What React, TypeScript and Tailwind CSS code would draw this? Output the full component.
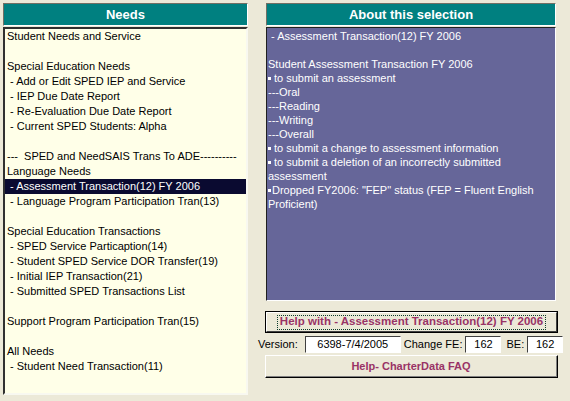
const needs: { text: string; selected?: boolean }[] = [
  { text: 'Student Needs and Service' },
  { text: '' },
  { text: 'Special Education Needs' },
  { text: ' - Add or Edit SPED IEP and Service' },
  { text: ' - IEP Due Date Report' },
  { text: ' - Re-Evaluation Due Date Report' },
  { text: ' - Current SPED Students: Alpha' },
  { text: '' },
  { text: '---  SPED and NeedSAIS Trans To ADE----------' },
  { text: 'Language Needs' },
  { text: ' - Assessment Transaction(12) FY 2006', selected: true },
  { text: ' - Language Program Participation Tran(13)' },
  { text: '' },
  { text: 'Special Education Transactions' },
  { text: ' - SPED Service Particaption(14)' },
  { text: ' - Student SPED Service DOR Transfer(19)' },
  { text: ' - Initial IEP Transaction(21)' },
  { text: ' - Submitted SPED Transactions List' },
  { text: '' },
  { text: 'Support Program Participation Tran(15)' },
  { text: '' },
  { text: 'All Needs' },
  { text: ' - Student Need Transaction(11)' },
];

// bullet: null = plain line, 'sp' = bullet + space, 'tight' = bullet glued to text
const about: { text: string; bullet?: 'sp' | 'tight' }[] = [
  { text: ' - Assessment Transaction(12) FY 2006' },
  { text: '' },
  { text: 'Student Assessment Transaction FY 2006' },
  { text: 'to submit an assessment', bullet: 'sp' },
  { text: '---Oral' },
  { text: '---Reading' },
  { text: '---Writing' },
  { text: '---Overall' },
  { text: 'to submit a change to assessment information', bullet: 'sp' },
  { text: 'to submit a deletion of an incorrectly submitted', bullet: 'sp' },
  { text: 'assessment' },
  { text: 'Dropped FY2006: "FEP" status (FEP = Fluent English', bullet: 'tight' },
  { text: 'Proficient)' },
];

const font = "font-['Liberation_Sans',Arial,sans-serif]";

const Header = ({ title }: { title: string }) => (
  <div className="h-[23px] bg-[#008080] border border-t-[#716f64] border-l-[#716f64] border-r-white border-b-white flex items-center justify-center text-white font-bold text-[13px] leading-none">
    {title}
  </div>
);

const Field = ({ value, w }: { value: string; w: string }) => (
  <div
    className={`${w} h-[17px] bg-white border border-t-[#404040] border-l-[#404040] border-r-white border-b-white flex items-center justify-center text-[11px] text-black leading-none`}
  >
    {value}
  </div>
);

export default function App() {
  return (
    <div className={`w-[570px] h-[401px] bg-[#ece9d8] pl-[3px] pt-[3px] flex gap-[10px] ${font}`}>
      {/* Needs list */}
      <div className="w-[245px] flex flex-col">
        <Header title="Needs" />
        <div className="mt-[1px] h-[368px] bg-[#ffffe8] border-2 border-t-[#303030] border-l-[#303030] border-r-[#f8f8f0] border-b-[#f8f8f0] overflow-hidden">
          {needs.map((n, i) => (
            <div
              key={i}
              className={`h-[15px] pl-[2px] whitespace-pre text-[11px] leading-[15px] ${
                n.selected ? 'bg-[#0a0a30] text-white' : 'text-black'
              }`}
            >
              {n.text}
            </div>
          ))}
        </div>
      </div>

      {/* About this selection */}
      <div className="w-[308px] flex flex-col">
        <div className="ml-[8px] w-[290px]">
          <Header title="About this selection" />
        </div>
        <div className="ml-[8px] w-[290px] mt-[1px] h-[274px] bg-[#666699] border border-t-[#202020] border-l-[#202020] border-r-white border-b-white pt-[1px] overflow-hidden">
          {about.map((a, i) => (
            <div key={i} className="h-[14px] pl-[1px] whitespace-pre text-[11px] leading-[14px] text-white flex items-center">
              {a.bullet && (
                <span
                  className={`inline-block w-[3px] h-[3px] bg-white ${a.bullet === 'sp' ? 'mr-[3px]' : 'mr-[1px]'}`}
                />
              )}
              {a.text}
            </div>
          ))}
        </div>

        {/* Help button (default, focused) */}
        <div className="ml-[7px] w-[293px] mt-[10px] h-[22px] border border-black">
          <div className="h-full border border-t-white border-l-white border-r-[#404040] border-b-[#404040] flex items-center justify-center">
            <div className="px-[2px] h-[15px] border border-dotted border-[#0a3a2a] flex items-center text-[11.5px] font-bold text-[#993366] leading-none">
              Help with - Assessment Transaction(12) FY 2006
            </div>
          </div>
        </div>

        {/* Version row */}
        <div className="mt-[3px] flex items-center text-[11px] text-black leading-none">
          <span>Version:</span>
          <div className="ml-[7px]">
            <Field value="6398-7/4/2005" w="w-[96px]" />
          </div>
          <span className="ml-[3px]">Change FE:</span>
          <div className="ml-[3px]">
            <Field value="162" w="w-[36px]" />
          </div>
          <span className="ml-[5px]">BE:</span>
          <div className="ml-[3px]">
            <Field value="162" w="w-[36px]" />
          </div>
        </div>

        {/* FAQ button */}
        <div className="ml-[7px] w-[293px] mt-[2px] h-[23px] border border-t-white border-l-white border-r-black border-b-black">
          <div className="h-full border-r border-b border-r-[#808080] border-b-[#808080] flex items-center justify-center text-[11px] font-bold text-[#993366] leading-none">
            Help- CharterData FAQ
          </div>
        </div>
      </div>
    </div>
  );
}
